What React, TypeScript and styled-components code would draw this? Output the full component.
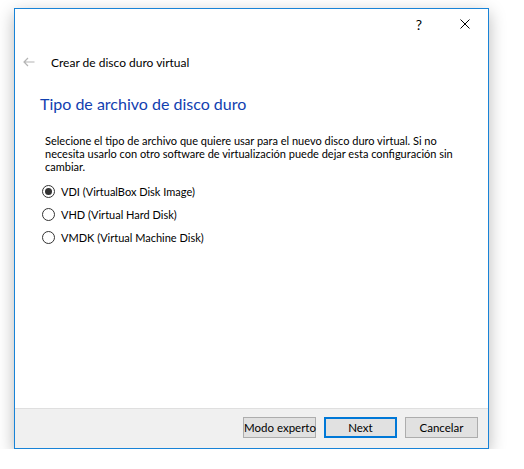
import React, { useState } from 'react';
import styled, { createGlobalStyle } from 'styled-components';

const GlobalStyle = createGlobalStyle`
  html, body {
    margin: 0;
    background: #ffffff;
  }
  * {
    box-sizing: border-box;
  }
  body {
    font-family: 'Segoe UI', Lato, 'Noto Sans', sans-serif;
    font-size: 11px;
    color: #000000;
  }
`;

const options = [
  { id: 'vdi', label: 'VDI (VirtualBox Disk Image)' },
  { id: 'vhd', label: 'VHD (Virtual Hard Disk)' },
  { id: 'vmdk', label: 'VMDK (Virtual Machine Disk)' },
];

const Page = styled.div`
  padding: 8px 0 0 14px;
`;

const Window = styled.div`
  width: 475px;
  height: 441px;
  border: 1px solid #1883d7;
  background: #ffffff;
  display: flex;
  flex-direction: column;
  box-shadow: 0 5px 16px rgba(0, 0, 0, 0.28);
`;

const TitleBar = styled.div`
  height: 30px;
  display: flex;
  justify-content: flex-end;
`;

const CaptionButton = styled.div`
  width: 46px;
  height: 30px;
  display: flex;
  align-items: center;
  justify-content: center;
  font-size: 14px;
  color: #000000;
`;

const Header = styled.div`
  margin-top: 12px;
  height: 22px;
  display: flex;
  align-items: center;
  padding-left: 8px;
`;

const BackArrow = styled.svg`
  width: 12px;
  height: 10px;
  margin-right: 16px;
`;

const HeaderText = styled.span`
  font-size: 12px;
`;

const Content = styled.div`
  flex: 1;
  padding: 20px 25px 0 25px;
`;

const Title = styled.h1`
  margin: 0;
  font-size: 16px;
  font-weight: 400;
  color: #1140b0;
  line-height: 22px;
`;

const Description = styled.p`
  margin: 19px 0 0 5px;
  width: 420px;
  font-size: 11px;
  line-height: 13px;
`;

const OptionList = styled.div`
  margin: 10px 0 0 2px;
  display: flex;
  flex-direction: column;
  gap: 7px;
`;

const OptionRow = styled.label`
  display: flex;
  align-items: center;
  height: 16px;
  gap: 6px;
  font-size: 11px;
  cursor: default;
`;

const RadioCircle = styled.span<{ $checked: boolean }>`
  width: 13px;
  height: 13px;
  border-radius: 50%;
  border: 1px solid #333333;
  background: #ffffff;
  display: flex;
  align-items: center;
  justify-content: center;
  &::after {
    content: '';
    width: 7px;
    height: 7px;
    border-radius: 50%;
    background: ${(p) => (p.$checked ? '#333333' : 'transparent')};
  }
`;

const Footer = styled.div`
  height: 40px;
  border-top: 1px solid #dfdfdf;
  background: #f0f0f0;
  display: flex;
  justify-content: flex-end;
  align-items: center;
  gap: 8px;
  padding: 0 10px 2px 0;
`;

const Button = styled.button<{ $default?: boolean }>`
  width: 73px;
  height: 21px;
  padding: 0;
  font-family: inherit;
  font-size: 11.5px;
  white-space: nowrap;
  color: #000000;
  background: #e1e1e1;
  border: ${(p) => (p.$default ? '2px solid #0078d7' : '1px solid #adadad')};
`;

export default function App() {
  const [selected, setSelected] = useState('vdi');

  return (
    <Page>
      <GlobalStyle />
      <Window>
        <TitleBar>
          <CaptionButton>?</CaptionButton>
          <CaptionButton>
            <svg width="10" height="10" viewBox="0 0 10 10">
              <path d="M0.5 0.5 L9.5 9.5 M9.5 0.5 L0.5 9.5" stroke="#000" strokeWidth="1" />
            </svg>
          </CaptionButton>
        </TitleBar>
        <Header>
          <BackArrow viewBox="0 0 12 10">
            <path d="M11.5 5 H1 M5 1 L1 5 L5 9" stroke="#b4b4b4" strokeWidth="1.2" fill="none" />
          </BackArrow>
          <HeaderText>Crear de disco duro virtual</HeaderText>
        </Header>
        <Content>
          <Title>Tipo de archivo de disco duro</Title>
          <Description>
            Selecione el tipo de archivo que quiere usar para el nuevo disco duro virtual. Si no
            necesita usarlo con otro software de virtualización puede dejar esta configuración sin
            cambiar.
          </Description>
          <OptionList>
            {options.map((o) => (
              <OptionRow key={o.id} onClick={() => setSelected(o.id)}>
                <RadioCircle $checked={selected === o.id} />
                {o.label}
              </OptionRow>
            ))}
          </OptionList>
        </Content>
        <Footer>
          <Button>Modo experto</Button>
          <Button $default>Next</Button>
          <Button>Cancelar</Button>
        </Footer>
      </Window>
    </Page>
  );
}
